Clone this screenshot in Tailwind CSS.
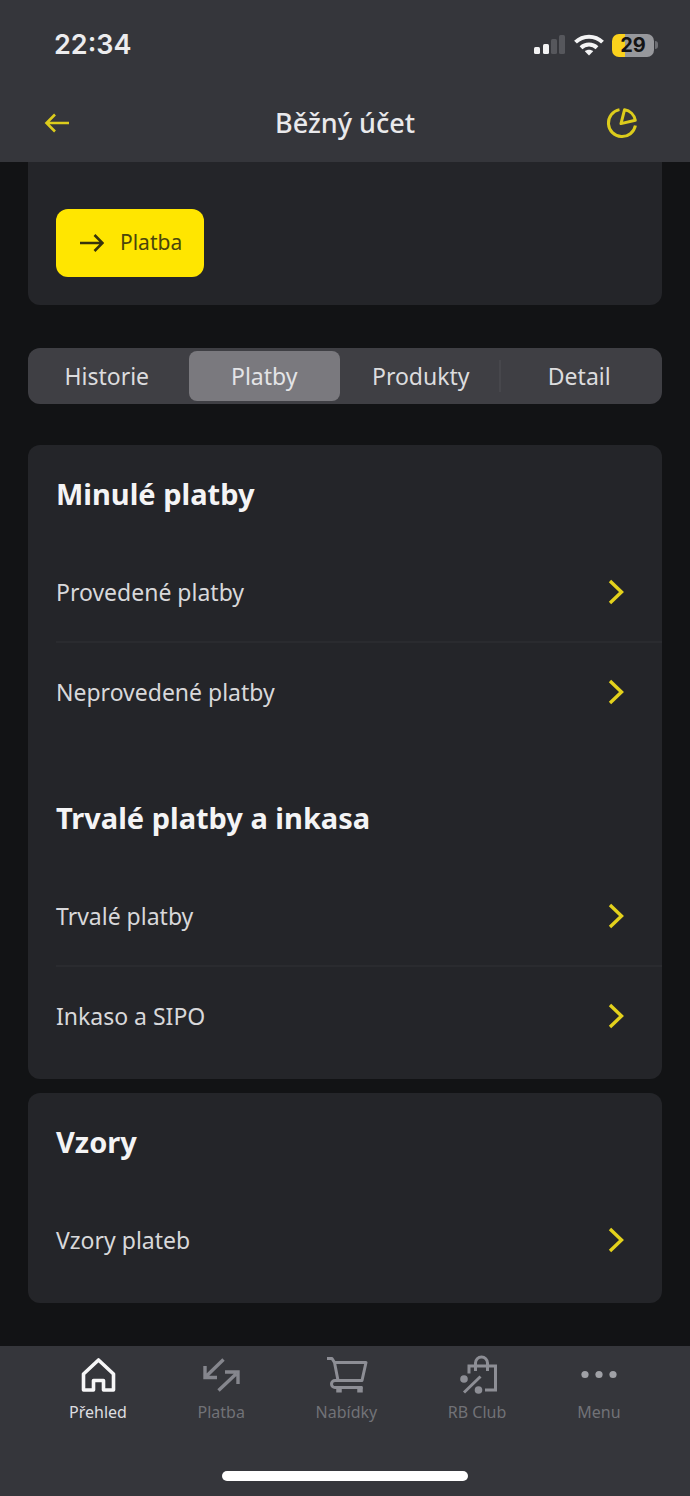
<!DOCTYPE html>
<html lang="cs">
<head>
<meta charset="utf-8">
<meta name="viewport" content="width=device-width, initial-scale=1">
<title>Běžný účet</title>
<script src="https://cdn.jsdelivr.net/npm/@tailwindcss/browser@4"></script>
</head>
<body class="flex min-h-screen flex-col bg-[#121315] font-['Noto_Sans','Open_Sans',sans-serif] text-[#d8d8da]">
<svg class="hidden" aria-hidden="true">
  <symbol id="chevron" viewBox="0 0 18 28"><path d="M2 3l11.500 11L2 25" fill="none" stroke="currentColor" stroke-width="3.400"/></symbol>
</svg>

<header class="bg-[#35363b]">
  <div class="flex h-[88px] items-center justify-between pt-0.5 pr-8 pl-[54px]">
    <span class="font-['Inter',sans-serif] text-[27px] font-semibold text-[#ececee]">22:34</span>
    <div class="flex items-center gap-2">
      <svg class="h-5 w-8" viewBox="0 0 32 20" aria-label="Signál">
        <rect x="0" y="12" width="6" height="7" rx="1.500" fill="#f2f2f3"/>
        <rect x="9" y="9" width="6" height="10" rx="1.500" fill="#f2f2f3"/>
        <rect x="17" y="4" width="6" height="15" rx="1.500" fill="#56575c"/>
        <rect x="25" y="0" width="6" height="19" rx="1.500" fill="#56575c"/>
      </svg>
      <svg class="h-[22px] w-[30px]" viewBox="0 0 30 22" fill="none" stroke="#f4f4f5" stroke-width="4" aria-label="Wi-Fi">
        <path d="M1.500 8.200C9 .8 21 .8 28.500 8.200"/>
        <path d="M7 13.800c4.500-4.300 11.500-4.300 16 0"/>
        <path d="M10.800 17.200c2.400-2 6-2 8.400 0L15 21.500z" fill="#f4f4f5" stroke="none"/>
      </svg>
      <div class="flex items-center gap-px">
        <div class="flex h-[23px] w-[42px] items-center justify-center rounded-[7px] bg-linear-to-r from-[#fbd21c] from-30% to-[#97989c] to-30% font-['Inter',sans-serif] text-[20px] leading-none font-bold text-[#141414]">29</div>
        <div class="h-2 w-[3px] rounded-r-full bg-[#6d6e73]"></div>
      </div>
    </div>
  </div>
  <div class="grid h-[74px] grid-cols-[1fr_auto_1fr] items-center px-11 pb-1">
    <button type="button" aria-label="Zpět" class="justify-self-start text-[#dccc1c]">
      <svg class="h-6 w-[27px]" viewBox="0 0 27 24" fill="none" stroke="currentColor" stroke-width="2.600"><path d="M25 12H3M11 3.500L2.500 12l8.500 8.500"/></svg>
    </button>
    <h1 class="text-[27px] font-medium text-[#e9e9eb]">Běžný účet</h1>
    <button type="button" aria-label="Statistiky" class="justify-self-end pr-2 text-[#dccc1c]">
      <svg class="size-8" viewBox="0 0 32 32" fill="none" stroke="currentColor" stroke-width="3"><path d="M13.500 2.600A13.600 13.600 0 1 0 29.400 18.500"/><path d="M18.500 2.800A13 13 0 0 1 29.300 13.300L15 16.600z" stroke-linejoin="round"/></svg>
    </button>
  </div>
</header>

<main class="flex-1 px-7 pb-[42px]">
  <section class="rounded-b-xl bg-[#242529] px-7 pt-[47px] pb-7">
    <button type="button" class="flex h-[68px] items-center gap-4 rounded-xl bg-[#ffe600] pr-[22px] pl-6 text-[21px] text-[#4a450c]">
      <svg class="h-5 w-6" viewBox="0 0 24 20" fill="none" stroke="#37330c" stroke-width="2.600"><path d="M0 10h22M14.500 2l8 8-8 8"/></svg>
      Platba
    </button>
  </section>

  <nav aria-label="Sekce účtu" class="mt-[43px] grid h-14 grid-cols-4 items-center rounded-xl bg-[#3f3f44] pr-1 text-[23px] text-[#dcdcde]">
    <button type="button" class="h-8 leading-8">Historie</button>
    <button type="button" aria-current="true" class="mx-[3px] h-[50px] rounded-lg bg-[#7a797e] text-[#e4e4e6]">Platby</button>
    <button type="button" class="h-8 border-r-2 border-[#47474c] leading-8">Produkty</button>
    <button type="button" class="h-8 leading-8">Detail</button>
  </nav>

  <section class="mt-[41px] rounded-xl bg-[#242529] pb-3.5 pl-7">
    <h2 class="flex h-[98px] items-center text-[29px] font-bold text-[#f4f4f5]">Minulé platby</h2>
    <ul class="divide-y-2 divide-[#2a2b2f] text-[23px]">
      <li><a href="#provedene" class="flex h-[98px] items-center justify-between pr-9">Provedené platby<svg class="h-7 w-[18px] text-[#e3d11c]"><use href="#chevron"/></svg></a></li>
      <li><a href="#neprovedene" class="flex h-[98px] items-center justify-between pr-9">Neprovedené platby<svg class="h-7 w-[18px] text-[#e3d11c]"><use href="#chevron"/></svg></a></li>
    </ul>
    <h2 class="mt-7 flex h-[98px] items-center text-[29px] font-bold text-[#f4f4f5]">Trvalé platby a inkasa</h2>
    <ul class="divide-y-2 divide-[#2a2b2f] text-[23px]">
      <li><a href="#trvale" class="flex h-[98px] items-center justify-between pr-9">Trvalé platby<svg class="h-7 w-[18px] text-[#e3d11c]"><use href="#chevron"/></svg></a></li>
      <li><a href="#inkaso" class="flex h-[98px] items-center justify-between pr-9">Inkaso a SIPO<svg class="h-7 w-[18px] text-[#e3d11c]"><use href="#chevron"/></svg></a></li>
    </ul>
  </section>

  <section class="mt-3.5 rounded-xl bg-[#242529] pb-3.5 pl-7">
    <h2 class="flex h-[98px] items-center text-[29px] font-bold text-[#f4f4f5]">Vzory</h2>
    <a href="#vzory" class="flex h-[98px] items-center justify-between pr-9 text-[23px]">Vzory plateb<svg class="h-7 w-[18px] text-[#e3d11c]"><use href="#chevron"/></svg></a>
  </section>
</main>

<footer class="flex h-[150px] flex-col justify-between bg-[#35363b] pt-2 pb-[15px]">
  <nav aria-label="Hlavní navigace" class="flex justify-between px-[10%] text-[16px] leading-5 text-[#717277]">
    <a href="#prehled" aria-current="page" class="flex flex-col items-center gap-1 text-[#dedee0]">
      <svg class="h-11 w-11" viewBox="0 0 44 44" fill="none" stroke="#f6f6f7" stroke-width="3.600" stroke-linejoin="round"><path d="M22.500 6L7.500 20V36H17.500V26.500h10V36h10V20z"/></svg>
      Přehled
    </a>
    <a href="#platba" class="flex flex-col items-center gap-1">
      <svg class="h-11 w-11" viewBox="0 0 44 44" fill="none" stroke="#85868d" stroke-width="3.400"><path d="M24.500 5.500L7.500 22M6 12v11.500h12M19.500 36.500L37 20M26 18h13v12"/></svg>
      Platba
    </a>
    <a href="#nabidky" class="flex flex-col items-center gap-1">
      <svg class="h-11 w-11" viewBox="0 0 44 44" fill="none" stroke="#8d8e95" stroke-width="3" stroke-linejoin="round"><path d="M3 4.500h5l2.500 4h31.500l-4 18H14L10.500 8.500M14 26.500h-3a3.500 3.500 0 0 0 0 7H38.500"/><path d="M15 33v5.500M36 33v5.500" stroke-width="5.500"/></svg>
      Nabídky
    </a>
    <a href="#rbclub" class="flex flex-col items-center gap-1">
      <svg class="h-11 w-11" viewBox="0 0 44 44" fill="none" stroke="#8d8e95" stroke-width="3"><path d="M14 19.500V12H40.500V36H30M20.500 17V9a6 6 0 0 1 12 0v8M25.500 22.500L9 38.500"/><circle cx="9" cy="25" r="3.800" fill="#8d8e95" stroke="none"/><circle cx="23.500" cy="36" r="3.800" fill="#8d8e95" stroke="none"/></svg>
      RB Club
    </a>
    <a href="#menu" class="flex flex-col items-center gap-1">
      <svg class="h-11 w-11" viewBox="0 0 44 44" fill="#a0a1a6"><circle cx="8" cy="20.500" r="3.600"/><circle cx="22" cy="20.500" r="3.600"/><circle cx="36" cy="20.500" r="3.600"/></svg>
      Menu
    </a>
  </nav>
  <div class="h-2.5 w-[246px] self-center rounded-full bg-white"></div>
</footer>
</body>
</html>
